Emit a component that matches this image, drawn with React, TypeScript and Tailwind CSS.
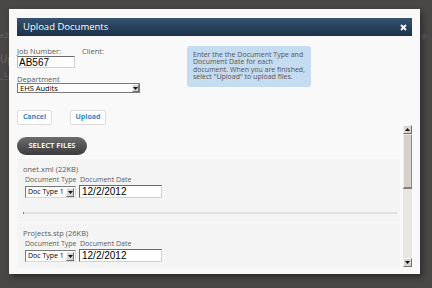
import React from 'react';

const label = "whitespace-nowrap text-[7.5px] leading-[9px] text-[#5a5a5a] font-['Open_Sans',sans-serif]";
const small = "whitespace-nowrap text-[7px] leading-[9px] text-[#5a5a5a] font-['Open_Sans',sans-serif]";

function ArrowBox({ dir = 'down', className = '' }: { dir?: 'up' | 'down'; className?: string }) {
    return (
        <div className={`flex items-center justify-center bg-[#d8d5d0] border border-t-[#f4f4f4] border-l-[#f4f4f4] border-r-[#707070] border-b-[#707070] ${className}`}>
            <svg width="5" height="3" viewBox="0 0 5 3">
                {dir === 'down' ? <path d="M0 0H5L2.5 3Z" fill="#111" /> : <path d="M0 3H5L2.5 0Z" fill="#111" />}
            </svg>
        </div>
    );
}

function FileBlock({ name }: { name: string }) {
    return (
        <div className="pl-[6px] pt-[6px]">
            <div className={label}>{name}</div>
            <div className="pl-[2px] mt-[1px]">
                <div className="flex">
                    <span className={`${small} w-[55px]`}>Document Type</span>
                    <span className={small}>Document Date</span>
                </div>
                <div className="flex gap-[3px] mt-[2px]">
                    <div className="w-[51px] h-[12px] flex items-center bg-white border border-t-[#7a7a7a] border-l-[#7a7a7a] border-r-[#d8d8d8] border-b-[#d8d8d8]">
                        <span className="flex-1 whitespace-nowrap overflow-hidden pl-[2px] text-[7px] leading-[10px] text-black font-['Open_Sans',sans-serif]">Doc Type 1</span>
                        <ArrowBox className="w-[8px] h-[9px] mr-[1px] shrink-0" />
                    </div>
                    <div className="w-[83px] h-[13px] -mt-[1px] flex items-center bg-white border border-t-[#6a6a6a] border-l-[#6a6a6a] border-r-[#d0d0d0] border-b-[#d0d0d0] pl-[2px] text-[10px] text-black font-['Liberation_Sans',sans-serif]">
                        12/2/2012
                    </div>
                </div>
            </div>
        </div>
    );
}

export default function App() {
    return (
        <div className="relative w-[432px] h-[288px] overflow-hidden bg-[#4a4747] font-['Open_Sans',sans-serif]">
            {/* page behind the overlay */}
            <div className="absolute left-0 top-[29px] text-[8px] text-[#6b6868]">e2</div>
            <div className="absolute left-0 top-[52px] text-[10px] text-[#6b6868]">Up</div>
            <div className="absolute left-[4px] top-[68px] text-[8px] text-[#6b6868]">L</div>
            <div className="absolute left-0 top-[79px] w-[9px] h-px bg-[#5a5757]" />
            <div className="absolute left-[421px] top-[32px] text-[6px] text-[#6b6868]">@..</div>

            {/* modal */}
            <div className="absolute left-[9px] top-[9px] w-[411px] h-[265px] bg-[#f9f9f9] shadow-[2px_3px_6px_rgba(0,0,0,0.45)] px-[8px] pt-[9px]">
                <div className="h-[18px] flex items-center justify-between bg-gradient-to-b from-[#36526e] to-[#1c3149] pl-[6px] pr-[5px]">
                    <span className="text-[9.5px] text-white font-['Open_Sans',sans-serif]">Upload Documents</span>
                    <svg width="7" height="7" viewBox="0 0 7 7">
                        <path d="M1 1L6 6M6 1L1 6" stroke="#fff" strokeWidth="1.8" />
                    </svg>
                </div>

                <div className="flex mt-[11px]">
                    <div className="w-[170px]">
                        <div className="flex">
                            <div className="w-[65px]">
                                <div className={label}>Job Number:</div>
                                <div className="w-[58px] h-[12px] bg-white border border-t-[#6a6a6a] border-l-[#bbb] border-r-[#d0d0d0] border-b-[#d0d0d0] flex items-center pl-[1px] text-[10px] text-black font-['Liberation_Sans',sans-serif]">
                                    AB567
                                </div>
                            </div>
                            <div className={label}>Client:</div>
                        </div>
                        <div className={`${label} mt-[7px]`}>Department</div>
                        <div className="w-[123px] h-[10px] flex items-center bg-white border border-[#7a7a7a] mt-[-1px]">
                            <span className="flex-1 whitespace-nowrap pl-[2px] text-[7.5px] leading-[8px] text-black font-['Open_Sans',sans-serif]">EHS Audits</span>
                            <ArrowBox className="w-[7px] h-[8px]" />
                        </div>
                    </div>
                    <div className="w-[124px] h-[41px] -mt-[1px] rounded-[3px] bg-[#c5dbef] px-[6px] pt-[5px] text-[7px] leading-[7.4px] text-[#555] font-['Open_Sans',sans-serif]">
                        Enter the the Document Type and Document Date for each document. When you are finished, select "Upload" to upload files.
                    </div>
                </div>

                <div className="flex gap-[18px] mt-[17px]">
                    <button className="w-[35px] h-[15px] bg-white border border-[#dcdcdc] rounded-[2px] text-[7px] font-bold text-[#3585c8] font-['Open_Sans',sans-serif]">
                        Cancel
                    </button>
                    <button className="w-[36px] h-[15px] bg-white border border-[#dcdcdc] rounded-[2px] text-[7px] font-bold text-[#3585c8] font-['Open_Sans',sans-serif]">
                        Upload
                    </button>
                </div>

                <div className="flex h-[142px]">
                    <div className="flex-1 pr-[3px]">
                        <button className="mt-[12px] w-[70px] h-[18px] rounded-full bg-gradient-to-b from-[#6c6c6c] to-[#3c3c3c] text-[7.5px] font-bold text-[#eee] font-['Open_Sans',sans-serif]">
                            SELECT FILES
                        </button>
                        <div className="mt-[4px]">
                            <div className="bg-[#f4f4f4] pb-[8px]">
                                <FileBlock name="onet.xml (22KB)" />
                                <div className="ml-[6px] mr-[3px] mt-[14px] h-[2px] bg-[#e0e0e0] relative">
                                    <div className="absolute left-0 top-0 w-[1px] h-[2px] bg-[#3b8fd8]" />
                                </div>
                            </div>
                            <div className="mt-[1px] h-[45px] bg-[#f4f4f4]">
                                <FileBlock name="Projects.stp (26KB)" />
                            </div>
                        </div>
                    </div>
                    <div className="w-[9px] flex flex-col bg-[#e8e6e2]">
                        <ArrowBox dir="up" className="w-[9px] h-[9px]" />
                        <div className="mt-[1px] h-[54px] bg-[#d5d1ca] border-l border-l-[#eee] border-r border-r-[#8a8a8a] border-b-2 border-b-[#808080]" />
                        <div className="flex-1" />
                        <ArrowBox className="w-[9px] h-[9px]" />
                    </div>
                </div>
            </div>
        </div>
    );
}
